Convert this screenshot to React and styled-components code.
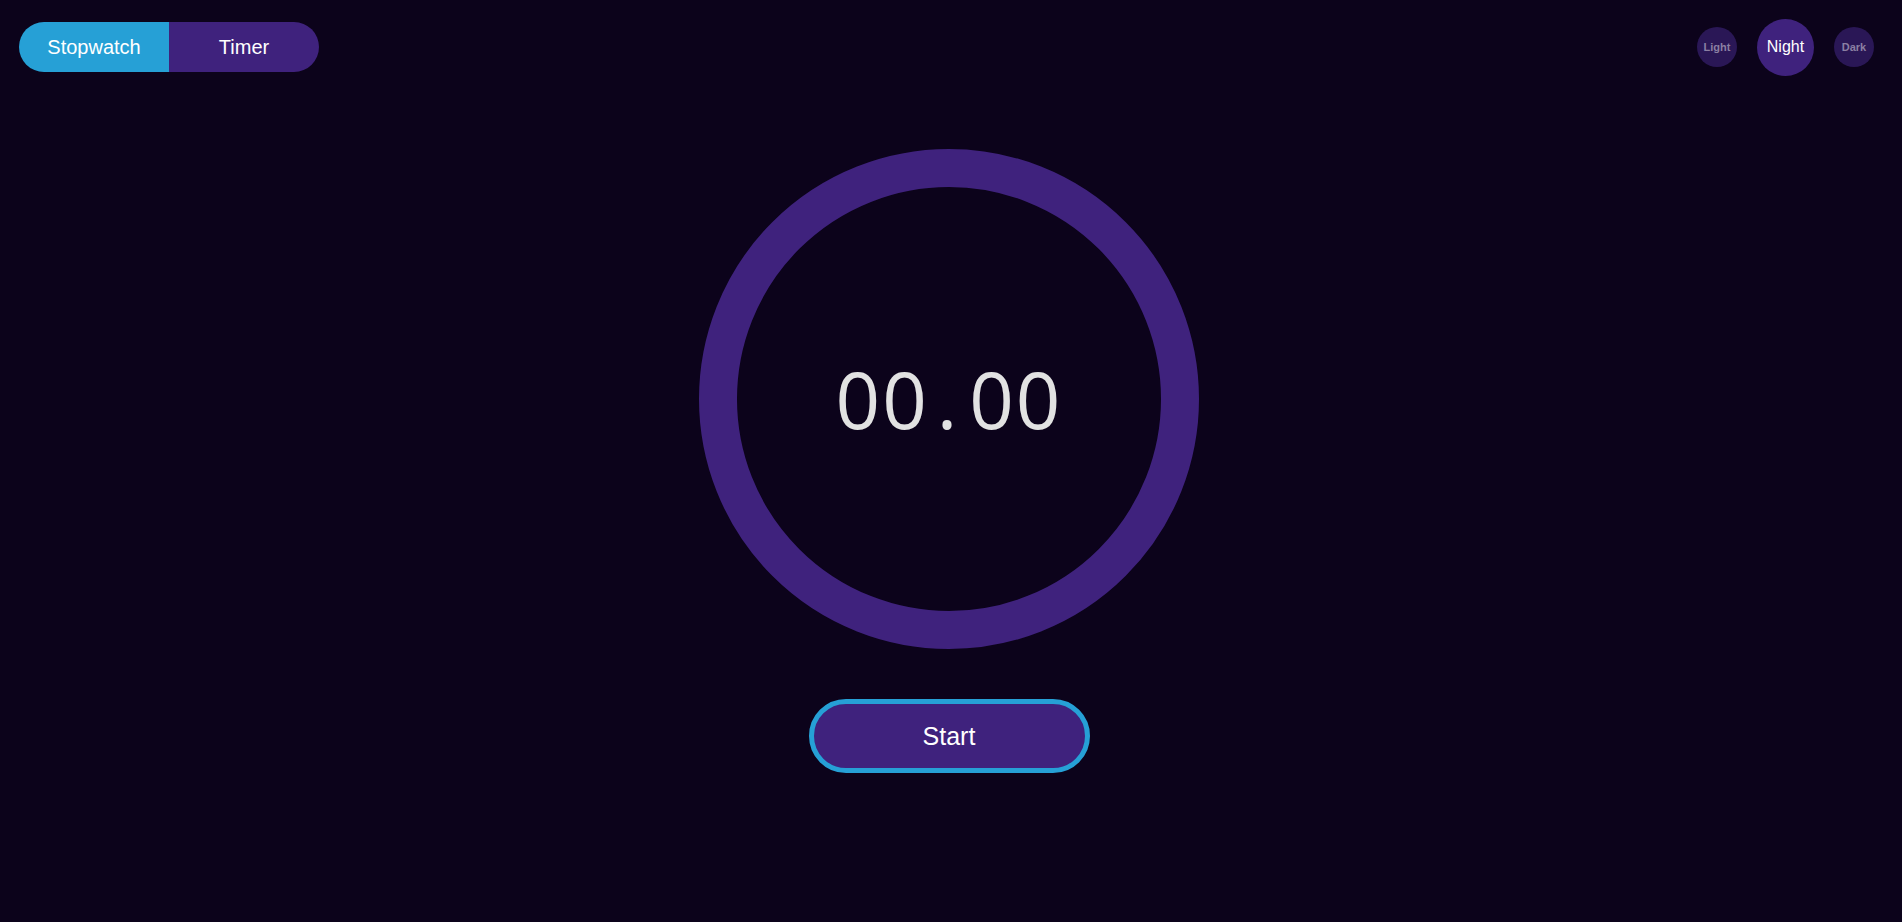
import React from 'react'
import styled, { createGlobalStyle } from 'styled-components'

const GlobalStyle = createGlobalStyle`
body {
  margin: 0;
  background-color: #0c031b;
  font-family: "Liberation Sans", Arial, sans-serif;
}
`;

const Page = styled.main`
min-height: 100vh;
display: flex;
flex-direction: column;
`;

const TopBar = styled.header`
display: flex;
justify-content: space-between;
align-items: center;
padding: 18px 28px 0 19px;
height: 58px;
`;

const ModeToggle = styled.div`
display: flex;
height: 50px;
border-radius: 25px;
overflow: hidden;
`;

const ModeButton = styled.button`
width: 150px;
border: 0;
font-family: inherit;
font-size: 20px;
color: #fff;
background-color: ${p => (p.active ? '#26a0d6' : '#3f227d')};
cursor: pointer;
`;

const ThemeRow = styled.div`
display: flex;
align-items: center;
gap: 20px;
`;

const ThemeButton = styled.button`
width: ${p => (p.active ? '57px' : '40px')};
height: ${p => (p.active ? '57px' : '40px')};
border-radius: 50%;
border: 0;
padding: 0;
font-family: inherit;
font-size: ${p => (p.active ? '16px' : '11px')};
font-weight: ${p => (p.active ? 400 : 700)};
color: ${p => (p.active ? '#ffffff' : '#8b7fa3')};
background-color: ${p => (p.active ? '#3f227d' : '#2a1756')};
cursor: pointer;
`;

const Center = styled.section`
display: flex;
flex-direction: column;
align-items: center;
padding: 73px 4px 0 0;
`;

const Dial = styled.div`
width: 424px;
height: 424px;
border: 38px solid #3f227d;
border-radius: 50%;
display: flex;
align-items: center;
justify-content: center;
`;

const Readout = styled.div`
font-family: "Open Sans", sans-serif;
font-size: 78px;
letter-spacing: 2px;
color: #e2e2e2;
display: flex;
align-items: baseline;
span {
  margin: 0 10px 0 8px;
}
`;

const StartButton = styled.button`
margin-top: 50px;
width: 281px;
height: 74px;
border-radius: 37px;
border: 5px solid #26a0d6;
background-color: #3f227d;
color: #fff;
font-family: inherit;
font-size: 25px;
cursor: pointer;
`;

function App() {
  return (
    <Page>
      <GlobalStyle />
      <TopBar>
        <ModeToggle>
          <ModeButton active>Stopwatch</ModeButton>
          <ModeButton>Timer</ModeButton>
        </ModeToggle>
        <ThemeRow>
          <ThemeButton>Light</ThemeButton>
          <ThemeButton active>Night</ThemeButton>
          <ThemeButton>Dark</ThemeButton>
        </ThemeRow>
      </TopBar>
      <Center>
        <Dial>
          <Readout>00<span>.</span>00</Readout>
        </Dial>
        <StartButton>Start</StartButton>
      </Center>
    </Page>
  )
}

export default App
